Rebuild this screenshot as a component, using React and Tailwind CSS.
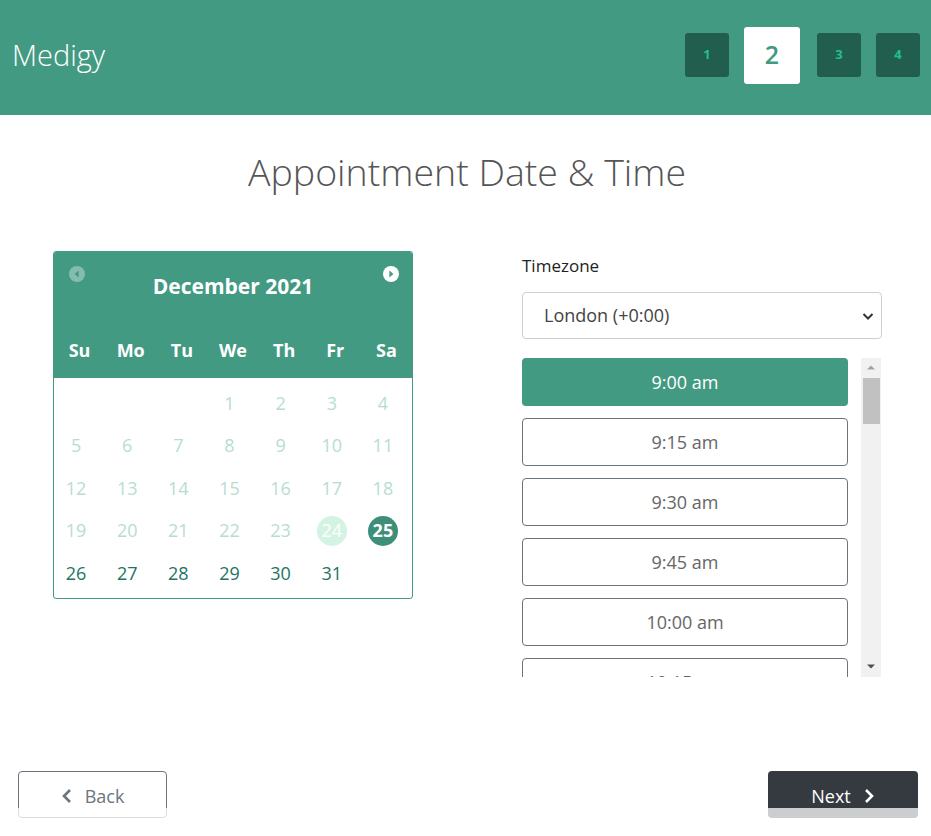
import React from "react";

const font = { fontFamily: '"Open Sans", "Noto Sans", sans-serif' };

function Step({ n, active }) {
  if (active)
    return (
      <div className="flex h-[57px] w-[56px] items-center justify-center rounded-[3px] bg-white text-[25px] font-semibold text-[#3f9a80]">
        {n}
      </div>
    );
  return (
    <div className="flex h-[44px] w-[44px] items-center justify-center rounded-[3px] bg-[#225e4e] text-[13px] font-bold text-[#22c08a]">
      {n}
    </div>
  );
}

const weeks = [
  [null, null, null, 1, 2, 3, 4],
  [5, 6, 7, 8, 9, 10, 11],
  [12, 13, 14, 15, 16, 17, 18],
  [19, 20, 21, 22, 23, 24, 25],
  [26, 27, 28, 29, 30, 31, null],
];

function Day({ d }) {
  if (d === null) return <div />;
  if (d === 24)
    return (
      <div className="flex items-center justify-center">
        <span className="flex h-[30px] w-[30px] items-center justify-center rounded-full bg-[#d3f3e3] text-[18px] text-white">
          24
        </span>
      </div>
    );
  if (d === 25)
    return (
      <div className="flex items-center justify-center">
        <span className="flex h-[30px] w-[30px] items-center justify-center rounded-full bg-[#3d8f78] text-[18px] font-bold text-white">
          25
        </span>
      </div>
    );
  const enabled = d >= 26;
  return (
    <div
      className={
        "flex items-center justify-center text-[18px] " +
        (enabled ? "text-[#1e7461]" : "text-[#b7ddd0]")
      }
    >
      {d}
    </div>
  );
}

const times = ["9:00 am", "9:15 am", "9:30 am", "9:45 am", "10:00 am", "10:15 am"];

export default function App() {
  return (
    <div className="relative h-[836px] w-[931px] overflow-hidden bg-white" style={font}>
      {/* Header */}
      <div className="flex h-[115px] items-center justify-between bg-[#439a82] pb-[5px] pl-[12px] pr-[11px]">
        <div className="text-[29px] font-light text-white">Medigy</div>
        <div className="flex items-center gap-[15px]">
          <Step n={1} />
          <Step n={2} active />
          <div className="ml-[2px]">
            <Step n={3} />
          </div>
          <Step n={4} />
        </div>
      </div>

      {/* Title */}
      <h1 className="mt-[33px] pl-[3px] text-center text-[37.5px] font-light leading-[48px] text-[#555]">
        Appointment Date &amp; Time
      </h1>

      <div className="mt-[55px] flex pl-[53px]">
        {/* Calendar */}
        <div className="w-[360px] shrink-0">
          <div className="h-[348px] overflow-hidden rounded-[3px] border border-[#439a82]">
            <div className="bg-[#439a82] pb-[16px]">
              <div className="relative flex h-[70px] items-center justify-center">
                <span className="text-[21px] font-bold text-white">December 2021</span>
                <svg className="absolute left-[15px] top-[14px]" width="16" height="16" viewBox="0 0 16 16">
                  <circle cx="8" cy="8" r="8" fill="rgba(255,255,255,0.35)" />
                  <path d="M9.6 4.6 L5.6 8 L9.6 11.4 Z" fill="#439a82" />
                </svg>
                <svg className="absolute right-[13px] top-[14px]" width="16" height="16" viewBox="0 0 16 16">
                  <circle cx="8" cy="8" r="8" fill="#fff" />
                  <path d="M6.4 4.6 L10.4 8 L6.4 11.4 Z" fill="#439a82" />
                </svg>
              </div>
              <div className="mt-[16px] grid grid-cols-7 text-center text-[18px] font-bold leading-[24px] text-white">
                {["Su", "Mo", "Tu", "We", "Th", "Fr", "Sa"].map((w) => (
                  <div key={w}>{w}</div>
                ))}
              </div>
            </div>
            <div className="ml-[-3.5px] mr-[3.5px] flex flex-col pt-[4px]">
              {weeks.map((wk, i) => (
                <div key={i} className="grid h-[42.5px] grid-cols-7">
                  {wk.map((d, j) => (
                    <Day key={j} d={d} />
                  ))}
                </div>
              ))}
            </div>
          </div>
        </div>

        {/* Right column */}
        <div className="ml-[109px] w-[360px] shrink-0">
          <div className="mt-[3px] text-[17px] leading-[24px] text-[#222]">Timezone</div>
          <div className="mt-[14px] flex h-[47px] items-center justify-between rounded-[4px] border border-[#cfcfcf] pl-[21px] pr-[6px] text-[18px] text-[#444]">
            <span>London (+0:00)</span>
            <svg width="14" height="14" viewBox="0 0 14 14">
              <path d="M2.5 5 L7 9.5 L11.5 5" fill="none" stroke="#333" strokeWidth="2" />
            </svg>
          </div>
          <div className="mt-[19px] flex h-[319px]">
            <div className="flex w-[326px] flex-col gap-[12px] overflow-hidden">
              {times.map((t, i) => (
                <div
                  key={t}
                  className={
                    "flex h-[48px] shrink-0 items-center justify-center rounded-[4px] pt-[1px] text-[18px] " +
                    (i === 0
                      ? "bg-[#439a82] text-white"
                      : "border border-[#6c757d] text-[#666]")
                  }
                >
                  {t}
                </div>
              ))}
            </div>
            {/* scrollbar */}
            <div className="ml-[13px] flex w-[20px] flex-col items-center bg-[#f1f1f1]">
              <svg className="mt-[6px]" width="10" height="6" viewBox="0 0 10 6">
                <path d="M1 5.5 L5 1.5 L9 5.5 Z" fill="#a3a3a3" />
              </svg>
              <div className="mt-[8px] h-[46px] w-[17px] bg-[#c1c1c1]" />
              <div className="flex-1" />
              <svg className="mb-[7px]" width="10" height="6" viewBox="0 0 10 6">
                <path d="M1 0.5 L5 4.5 L9 0.5 Z" fill="#505050" />
              </svg>
            </div>
          </div>
        </div>
      </div>

      {/* Footer buttons */}
      <div className="absolute left-[18px] right-[13px] top-[771px] flex justify-between">
        <div className="flex h-[47px] w-[149px] items-center justify-center gap-[12px] rounded-[4px] border border-[#6c757d] pt-[3px] text-[18px] text-[#6c757d]">
          <svg width="12" height="16" viewBox="0 0 12 16">
            <path d="M9 2 L3 8 L9 14" fill="none" stroke="#6c757d" strokeWidth="2.6" />
          </svg>
          <span>Back</span>
        </div>
        <div className="flex h-[47px] w-[150px] items-center justify-center gap-[12px] rounded-[4px] bg-[#343a40] pt-[3px] text-[18px] text-white">
          <span>Next</span>
          <svg width="12" height="16" viewBox="0 0 12 16">
            <path d="M3 2 L9 8 L3 14" fill="none" stroke="#fff" strokeWidth="2.6" />
          </svg>
        </div>
      </div>
      {/* bottom translucent overlay */}
      <div className="absolute bottom-0 left-0 right-0 h-[28px] bg-white/75" />
    </div>
  );
}
